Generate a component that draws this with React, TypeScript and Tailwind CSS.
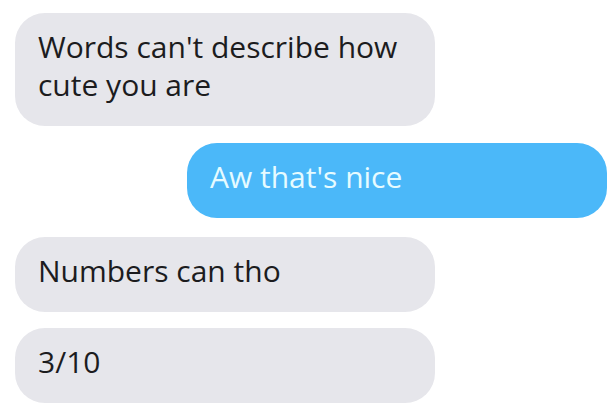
const messages = [
  { id: 1, text: "Words can't describe how cute you are", mine: false, gap: "mt-[13px]" },
  { id: 2, text: "Aw that's nice", mine: true, gap: "mt-[17px]" },
  { id: 3, text: "Numbers can tho", mine: false, gap: "mt-[19px]" },
  { id: 4, text: "3/10", mine: false, gap: "mt-[16px]" },
];

function Bubble({ text, mine, gap }: { text: string; mine: boolean; gap: string }) {
  return (
    <div
      className={
        (mine
          ? "ml-[187px] bg-[#4bb8f9] text-[#e6fbff] "
          : "ml-[15px] bg-[#e6e6eb] text-[#1c1c1e] ") +
        gap +
        " w-[420px] rounded-[30px] pt-[15px] pb-[22px] pl-[23px] pr-4"
      }
    >
      {text}
    </div>
  );
}

export default function App() {
  return (
    <div
      className="flex h-[409px] w-[614px] flex-col overflow-hidden bg-white text-[30px] leading-[38px]"
      style={{ fontFamily: '"Open Sans", sans-serif' }}
    >
      {messages.map((m) => (
        <Bubble key={m.id} text={m.text} mine={m.mine} gap={m.gap} />
      ))}
    </div>
  );
}
